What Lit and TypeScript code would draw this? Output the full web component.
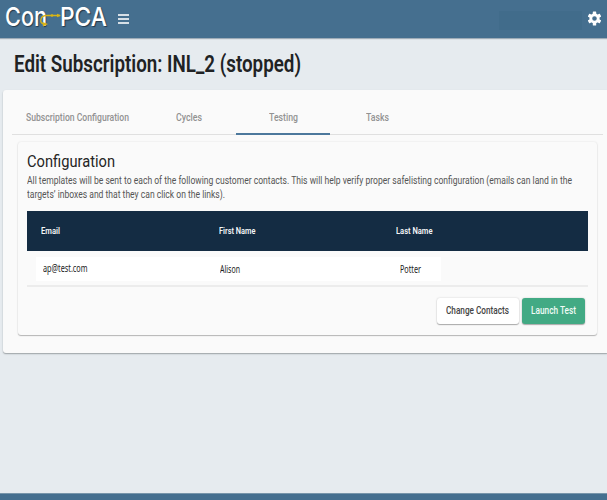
import { LitElement, html, css, svg } from "lit";
import { customElement, property } from "lit/decorators.js";

/** A single line of text squeezed or stretched horizontally to a given width. */
@customElement("fit-text")
class FitText extends LitElement {
  @property() text = "";
  @property({ type: Number }) width = 100;

  static styles = css`
    :host { display: block; flex: none; white-space: pre; }
    .line { display: inline-block; transform-origin: 0 50%; }
  `;

  render() {
    return html`<span class="line">${this.text}</span>`;
  }

  updated() {
    const line = this.renderRoot.querySelector(".line") as HTMLElement;
    line.style.transform = "none";
    const natural = line.getBoundingClientRect().width;
    this.style.width = `${this.width}px`;
    line.style.transform = `scaleX(${this.width / natural})`;
  }
}

const TABS = [
  { label: "Subscription Configuration", width: 103, wide: true },
  { label: "Cycles", width: 26 },
  { label: "Testing", width: 29, active: true },
  { label: "Tasks", width: 23 },
];

const teeth = [0, 60, 120, 180, 240, 300];

@customElement("app-root")
class AppRoot extends LitElement {
  static styles = css`
    * { box-sizing: border-box; }
    :host {
      display: flex; flex-direction: column; width: 607px; height: 500px;
      overflow: hidden; background: #e6ebef; color: #222;
      font-family: Roboto, "Liberation Sans", sans-serif;
    }
    header {
      flex: none; height: 38px; background: #456f8f; display: flex;
      padding: 0 6px 0 5px; box-shadow: 0 1px 1px #9eacb8;
    }
    .logo {
      display: flex; position: relative; width: 102px; gap: 13px;
      font: 500 26px/34px Inter, sans-serif; color: #fff;
      text-shadow: 1px 1px 1px #24394c;
    }
    .wire { position: absolute; left: 33px; top: 10px; }
    .menu { margin: 14px 0 0 11px; display: flex; flex-direction: column; gap: 2px; width: 11px; }
    .menu i { height: 2px; background: #d6dfe6; }
    .user { width: 83px; height: 19px; margin: 11px 6px 0 auto; background: #416c8b; }
    .gear { margin-top: 11px; flex: none; }
    h1, h2, p { margin: 0; }
    h1 { height: 52px; padding: 10px 0 0 14px; font: 600 24px/32px Roboto, sans-serif; color: #202224; }
    .card {
      flex: none; height: 263px; margin-left: 3px; padding: 9px 4px 0 9px; background: #fafafa;
      border-radius: 3px 0 0 3px;
      box-shadow: 0 1px 1px #a6abaf, 0 1px 2px #c3c9cd;
    }
    .tabs { display: flex; height: 36px; border-bottom: 1px solid #e0e0e0; }
    .tab {
      width: 94px; height: 36px; display: flex; justify-content: center; align-items: center;
      padding-top: 2px;
      font: 500 11.5px/14px Roboto, sans-serif; color: #929292; border-bottom: 2px solid transparent;
    }
    .tab.wide { width: 130px; }
    .tab.active { border-color: #4c789c; }
    .panel {
      height: 193px; margin: 7px 6px 0; padding: 8px 9px 0; background: #fafafa; border-radius: 3px;
      box-shadow: 0 1px 1px #b5b5b5, 0 0 2px #dedede;
    }
    h2 { font: 400 17px/22px Roboto, sans-serif; color: #252525; }
    p { height: 39px; padding-top: 1px; font: 400 11.5px/14px Roboto, sans-serif; color: #555; }
    .head {
      height: 40px; width: 561px; background: #142c43; color: #f4f6f8; display: grid;
      grid-template-columns: 178px 177px 1fr; align-items: center; padding-left: 14px;
      font: 600 9.5px/12px Roboto, sans-serif;
    }
    .row { height: 36px; width: 561px; padding: 6px 0 0 9px; border-bottom: 2px solid #ececec; }
    .cells {
      width: 405px; height: 24px; background: #fff; display: grid;
      grid-template-columns: 177px 180px 1fr; padding: 4px 0 0 7px;
      font: 400 10px/14px "Noto Sans", sans-serif; color: #222;
    }
    .cells .low { padding-top: 1px; }
    .actions { display: flex; justify-content: flex-end; gap: 3px; padding: 11px 3px 0 0; }
    .btn {
      height: 26px; width: 82px; display: flex; align-items: center; justify-content: center;
      font: 500 11px/14px Roboto, sans-serif; color: #444; background: #fff; border: 0;
      padding: 0 1px 0 0; border-radius: 3px; box-shadow: 0 1px 1px #aaa, 0 0 2px #ccc;
    }
    .btn.go { width: 63px; background: #42aa84; color: #f1fbf6; }
    footer { height: 7px; margin-top: auto; background: #456f8f; border-top: 1px solid #7895aa; }
  `;

  render() {
    return html`
      <header>
        <div class="logo">
          <fit-text text="Con" width="42"></fit-text>
          <fit-text text="PCA" width="47"></fit-text>
          <svg class="wire" width="24" height="17" viewBox="0 0 24 17">
            <path d="M22 5.5H8C2 6 1 13 6 14" fill="none" stroke="#d8b414" stroke-width="1.3" />
            <path d="M19 3.7 23 5.5 19 7.3zM4.5 12 10 14 5 16.5z" fill="#d8b414" />
            <circle cx="14" cy="5.5" r="1.3" fill="#d8b414" />
          </svg>
        </div>
        <div class="menu"><i></i><i></i><i></i></div>
        <div class="user"></div>
        <svg class="gear" width="13" height="15" viewBox="-6.5 -7.5 13 15">
          <g fill="#fff">
            ${teeth.map((a) => svg`<rect x="-1.7" y="-6.9" width="3.4" height="4" rx=".5" transform="rotate(${a})" />`)}
          </g>
          <circle r="3.7" fill="none" stroke="#fff" stroke-width="2.8" />
        </svg>
      </header>
      <h1><fit-text text="Edit Subscription: INL_2 (stopped)" width="287"></fit-text></h1>
      <section class="card">
        <nav class="tabs">
          ${TABS.map((t) => html`
            <div class="tab ${t.wide ? "wide" : ""} ${t.active ? "active" : ""}">
              <fit-text .text=${t.label} .width=${t.width}></fit-text>
            </div>`)}
        </nav>
        <section class="panel">
          <h2><fit-text text="Configuration" width="88"></fit-text></h2>
          <p>
            <fit-text width="545" text="All templates will be sent to each of the following customer contacts. This will help verify proper safelisting configuration (emails can land in the"></fit-text>
            <fit-text width="198" text="targets’ inboxes and that they can click on the links)."></fit-text>
          </p>
          <div class="head">
            <fit-text text="Email" width="19"></fit-text>
            <fit-text text="First Name" width="36.5"></fit-text>
            <fit-text text="Last Name" width="36.5"></fit-text>
          </div>
          <div class="row">
            <div class="cells">
              <fit-text text="ap@test.com" width="44.5"></fit-text>
              <fit-text class="low" text="Alison" width="20"></fit-text>
              <fit-text class="low" text="Potter" width="21"></fit-text>
            </div>
          </div>
          <div class="actions">
            <button class="btn"><fit-text text="Change Contacts" width="63"></fit-text></button>
            <button class="btn go"><fit-text text="Launch Test" width="45"></fit-text></button>
          </div>
        </section>
      </section>
      <footer></footer>
    `;
  }
}
